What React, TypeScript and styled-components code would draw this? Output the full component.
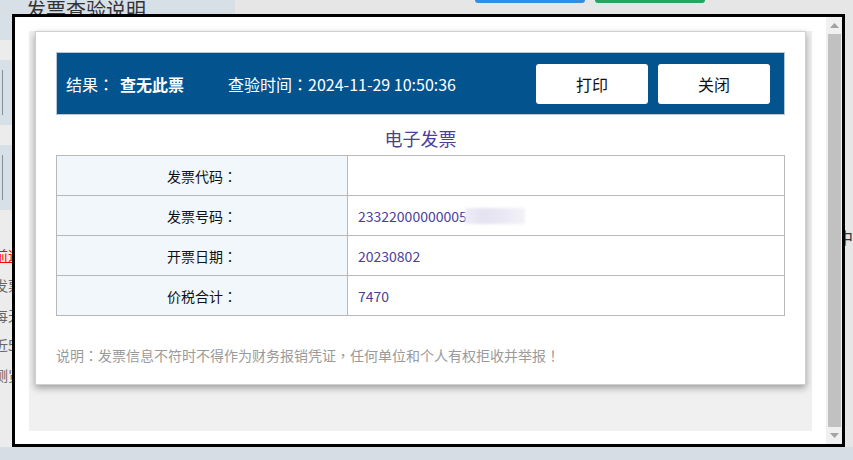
import React from "react";
import styled, { createGlobalStyle } from "styled-components";

const Global = createGlobalStyle`
  html, body { margin: 0; padding: 0; }
  body {
    width: 853px; height: 460px; overflow: hidden;
    background: #e6e6e6;
    font-family: "Noto Sans CJK SC", "Noto Sans", "Liberation Sans", sans-serif;
  }
`;

/* centered full-width punctuation, as in the reference font */
const P = styled.span`
  font-family: "Noto Sans CJK TC", "Noto Sans CJK SC", sans-serif;
`;

/* ---------- background page ---------- */
const Page = styled.div`
  display: flex;
  width: 853px;
  height: 460px;
  position: relative;
  overflow: hidden;
`;

const Side = styled.div`
  width: 235px;
  flex: none;
  display: flex;
  flex-direction: column;
  background: #ececec;
`;

const SideHead = styled.div`
  height: 40px;
  background: #d7dfe7;
  padding-left: 26px;
  font-size: 20px;
  line-height: 20px;
  color: #333;
  box-sizing: border-box;
`;

const SidePanel = styled.div`
  height: 65px;
  margin-top: 20px;
  background: #d7dfe7;
  display: flex;
  align-items: center;
  padding-left: 2px;
`;

const SideBar = styled.div`
  width: 1px;
  height: 45px;
  background: #8a8f96;
`;

const SideList = styled.div`
  display: flex;
  flex-direction: column;
  padding-top: 30px;
`;

const SideLine = styled.div<{ $red?: boolean }>`
  height: 30px;
  line-height: 30px;
  font-size: 14px;
  color: ${(p) => (p.$red ? "#ff0000" : "#666")};
  text-decoration: ${(p) => (p.$red ? "underline" : "none")};
  white-space: nowrap;
  margin-left: -6px;
`;

const Main = styled.div`
  flex: 1;
  display: flex;
  flex-direction: column;
`;

const TopBar = styled.div`
  display: flex;
  gap: 10px;
  padding-left: 240px;
  height: 14px;
  align-items: flex-start;
`;

const TopBtn = styled.div<{ $c: string }>`
  width: 110px;
  height: 3px;
  background: ${(p) => p.$c};
  border-radius: 0 0 3px 3px;
`;

const MainBody = styled.div`
  flex: 1;
  display: flex;
  justify-content: flex-end;
  align-items: center;
  font-size: 16px;
  color: #333;
`;

const BottomStrip = styled.div`
  position: absolute;
  left: 0;
  right: 0;
  bottom: 0;
  height: 13px;
  background: #d6dde5;
`;

/* ---------- modal ---------- */
const Modal = styled.div`
  position: absolute;
  left: 12px;
  top: 14px;
  width: 833px;
  height: 433px;
  box-sizing: border-box;
  border: 3px solid #000;
  background: #fff;
  display: flex;
`;

const Frame = styled.div`
  flex: 1;
  padding: 14px 14px 13px 14px;
  display: flex;
`;

const Gray = styled.div`
  flex: 1;
  background: #f0f0f0;
  padding: 0 6px 0 6px;
`;

const Card = styled.div`
  background: #fff;
  border: 1px solid #cfcfcf;
  box-shadow: 0 3px 7px rgba(0, 0, 0, 0.35);
  padding: 20px 20px 0 20px;
  height: 354px;
  box-sizing: border-box;
`;

const Header = styled.div`
  height: 63px;
  box-sizing: border-box;
  background: #03538f;
  border: 1px solid #b9c6d3;
  display: flex;
  align-items: center;
  padding: 0 14px 0 9px;
  color: #fff;
  font-size: 16px;
`;

const Label = styled.span`
  white-space: nowrap;
`;

const Bold = styled.span`
  font-weight: bold;
  margin-left: 6px;
`;

const Time = styled.span`
  margin-left: 44px;
  white-space: nowrap;
`;

const Spacer = styled.div`
  flex: 1;
`;

const Btn = styled.button`
  width: 112px;
  height: 40px;
  background: #fff;
  border: none;
  border-radius: 3px;
  font-family: inherit;
  font-size: 16px;
  color: #111;
  margin-left: 10px;
  padding: 0;
`;

const Title = styled.div`
  text-align: center;
  font-size: 18px;
  line-height: 22px;
  color: #4c4199;
  padding: 12px 0 6px;
`;

const Table = styled.div`
  display: grid;
  grid-template-columns: 291px 1fr;
  border: 1px solid #b8b8b8;
  border-bottom: none;
`;

const Cell = styled.div<{ $head?: boolean }>`
  height: 40px;
  box-sizing: border-box;
  border-bottom: 1px solid #b8b8b8;
  display: flex;
  align-items: center;
  font-size: 14px;
  ${(p) =>
    p.$head
      ? `background:#f2f7fb; justify-content:center; color:#111; border-right:1px solid #b8b8b8;`
      : `padding-left:10px; color:#4c3f9a;`}
`;

const Blur = styled.span`
  display: inline-block;
  width: 60px;
  height: 16px;
  margin-left: -2px;
  background: linear-gradient(90deg, #eeedf6 0%, #e4e2f0 30%, #e9e7f3 60%, #f3f2f8 100%);
  filter: blur(1.5px);
`;

const Note = styled.div`
  font-size: 14px;
  color: #9a9a9a;
  padding-top: 29px;
`;

const Scroll = styled.div`
  width: 16px;
  background: #f0f0f0;
  display: flex;
  flex-direction: column;
  align-items: center;
`;

const Arrow = styled.div`
  height: 17px;
  display: flex;
  align-items: center;
  justify-content: center;
`;

const Thumb = styled.div`
  flex: 1;
  width: 13px;
  background: #c1c1c1;
`;

const Tri = ({ down }: { down?: boolean }) => (
  <svg width="9" height="5" viewBox="0 0 9 5">
    <polygon points={down ? "0,0 9,0 4.5,5" : "4.5,0 9,5 0,5"} fill="#a3a3a3" />
  </svg>
);

const rows: [string, React.ReactNode][] = [
  ["发票代码", ""],
  [
    "发票号码",
    <>
      23322000000005
      <Blur />
    </>,
  ],
  ["开票日期", "20230802"],
  ["价税合计", "7470"],
];

export default function App() {
  return (
    <>
      <Global />
      <Page>
        <Side>
          <SideHead>发票查验说明</SideHead>
          <SidePanel>
            <SideBar />
          </SidePanel>
          <SidePanel>
            <SideBar />
          </SidePanel>
          <SideList>
            <SideLine $red>前述</SideLine>
            <SideLine>发票</SideLine>
            <SideLine>每天</SideLine>
            <SideLine>近5</SideLine>
            <SideLine>测览</SideLine>
          </SideList>
        </Side>
        <Main>
          <TopBar>
            <TopBtn $c="#2f8fe2" />
            <TopBtn $c="#27a45f" />
          </TopBar>
          <MainBody>中</MainBody>
        </Main>
        <BottomStrip />
        <Modal>
          <Frame>
            <Gray>
              <Card>
                <Header>
                  <Label>
                    结果<P>：</P>
                  </Label>
                  <Bold>查无此票</Bold>
                  <Time>
                    查验时间<P>：</P>2024-11-29 10:50:36
                  </Time>
                  <Spacer />
                  <Btn>打印</Btn>
                  <Btn>关闭</Btn>
                </Header>
                <Title>电子发票</Title>
                <Table>
                  {rows.map(([k, v]) => (
                    <React.Fragment key={k}>
                      <Cell $head>
                        {k}
                        <P>：</P>
                      </Cell>
                      <Cell>{v}</Cell>
                    </React.Fragment>
                  ))}
                </Table>
                <Note>
                  说明<P>：</P>发票信息不符时不得作为财务报销凭证<P>，</P>任何单位和个人有权拒收并举报<P>！</P>
                </Note>
              </Card>
            </Gray>
          </Frame>
          <Scroll>
            <Arrow>
              <Tri />
            </Arrow>
            <Thumb />
            <Arrow>
              <Tri down />
            </Arrow>
          </Scroll>
        </Modal>
      </Page>
    </>
  );
}
